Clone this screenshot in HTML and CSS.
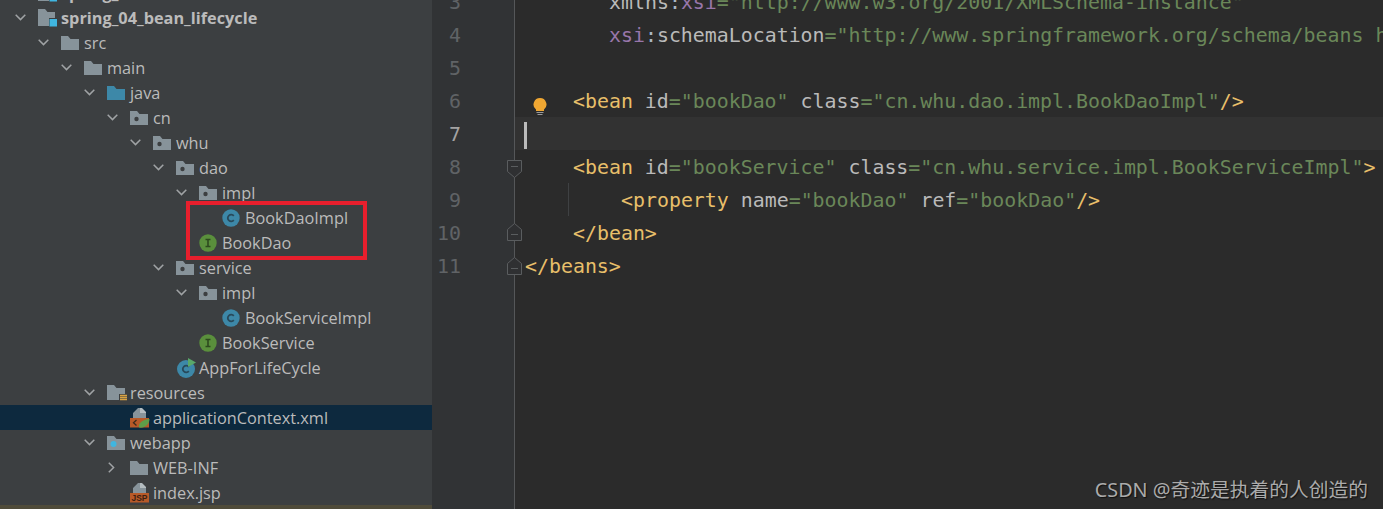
FILE: index.html
```html
<!DOCTYPE html>
<html lang="en">
<head>
<meta charset="utf-8">
<title>spring_04_bean_lifecycle</title>
<link rel="stylesheet" href="styles.css">
</head>
<body>
<svg class="defs" width="0" height="0" aria-hidden="true">
  <defs>
    <symbol id="chev-d" viewBox="0 0 11 7"><path d="M.7 .8 5.500 5.600 10.300 .8" fill="none" stroke="#a0a3a5" stroke-width="1.500"/></symbol>
    <symbol id="chev-r" viewBox="0 0 7 11"><path d="M.8 .7 5.600 5.500 .8 10.300" fill="none" stroke="#a0a3a5" stroke-width="1.500"/></symbol>
    <symbol id="folder" viewBox="0 0 18 16"><path d="M0 1h7l2.500 3H18v11H0z" fill="#87939a"/></symbol>
    <symbol id="java" viewBox="0 0 18 16"><path d="M0 1h7l2.500 3H18v11H0z" fill="#3d88a8"/></symbol>
    <symbol id="pkg" viewBox="0 0 18 16"><path d="M0 1h7l2.500 3H18v11H0z" fill="#87939a"/><circle cx="6.500" cy="9" r="2.200" fill="#3c3f41"/></symbol>
    <symbol id="web" viewBox="0 0 18 16"><path d="M0 1h7l2.500 3H18v11H0z" fill="#87939a"/><circle cx="6.500" cy="9" r="3" fill="#40b6e0"/></symbol>
    <symbol id="res" viewBox="0 0 20 16"><path d="M0 0h7l2.500 3H18v6h-6v6H0z" fill="#87939a"/><path d="M13 10.500h7M13 12.500h7M13 14.500h7" stroke="#d9a343" stroke-width="1.300"/></symbol>
    <symbol id="module" viewBox="0 0 19 18"><path d="M0 0h7l2.500 3H17v6h-6v8H0z" fill="#87939a"/><rect x="11.500" y="10" width="7.500" height="7.500" fill="#40b6e0"/></symbol>
    <symbol id="cls" viewBox="0 0 18 18"><circle cx="9" cy="9" r="8.700" fill="#3d88a8"/><path d="M11.800 6.800A3.400 3.400 0 1 0 11.800 11.200" fill="none" stroke="#28495a" stroke-width="1.800"/></symbol>
    <symbol id="ifc" viewBox="0 0 18 18"><circle cx="9" cy="9" r="8.700" fill="#5a8f3c"/><path d="M6.500 5.500h5M6.500 12.500h5M9 5.500v7" fill="none" stroke="#2d4a1e" stroke-width="1.600"/></symbol>
    <symbol id="run" viewBox="0 0 20 20"><circle cx="10" cy="11" r="9" fill="#3d88a8"/><path d="M12.800 8.800A3.400 3.400 0 1 0 12.800 13.200" fill="none" stroke="#28495a" stroke-width="1.800"/><path d="M12 0 20 4.500 12 9z" fill="#59a869"/></symbol>
    <symbol id="xml" viewBox="0 0 20 20"><path d="M3 10V5L8 0h2v5h6v5z" fill="#87939a"/><path d="M10 0h2l4 4v1h-6z" fill="#b4bcc0"/><rect x="0" y="10" width="19" height="9.500" fill="#b85a28"/><path d="M6.500 12 3.500 14.700 6.500 17.400" fill="none" stroke="#3c2a1c" stroke-width="1.300"/><path d="M9 19.500C8 15 13 11.500 19.500 11 19.500 16 15 20.500 9 19.500z" fill="#5f9e48"/></symbol>
    <symbol id="bulb" viewBox="0 0 14 18"><path d="M7 0a6.500 6.500 0 0 1 4 11.600V13H3v-1.400A6.500 6.500 0 0 1 7 0z" fill="#f0a732"/><path d="M3.500 14.500h7M4.500 16.500h5" stroke="#9a9a9a" stroke-width="1.200"/></symbol>
    <symbol id="fold-open" viewBox="0 0 15 18"><path d="M.5 .5h14v11l-7 6-7-6z" fill="#2f3032" stroke="#5a5d5f"/><path d="M4 6.500h7" stroke="#5a5d5f"/></symbol>
    <symbol id="fold-close" viewBox="0 0 15 18"><path d="M.5 17.500h14v-11l-7-6-7 6z" fill="#2f3032" stroke="#5a5d5f"/><path d="M4 11.500h7" stroke="#5a5d5f"/></symbol>
  </defs>
</svg>
<main class="ide">
  <aside class="tree">
    <div class="row top"><svg class="ic ic-mod"><use href="#module"/></svg><span class="bold">spring_04</span></div>
    <div class="row d0"><svg class="chev"><use href="#chev-d"/></svg><svg class="ic ic-mod"><use href="#module"/></svg><span class="bold">spring_04_bean_lifecycle</span></div>
    <div class="row d1"><svg class="chev"><use href="#chev-d"/></svg><svg class="ic"><use href="#folder"/></svg><span>src</span></div>
    <div class="row d2"><svg class="chev"><use href="#chev-d"/></svg><svg class="ic"><use href="#folder"/></svg><span>main</span></div>
    <div class="row d3"><svg class="chev"><use href="#chev-d"/></svg><svg class="ic"><use href="#java"/></svg><span>java</span></div>
    <div class="row d4"><svg class="chev"><use href="#chev-d"/></svg><svg class="ic"><use href="#pkg"/></svg><span>cn</span></div>
    <div class="row d5"><svg class="chev"><use href="#chev-d"/></svg><svg class="ic"><use href="#pkg"/></svg><span>whu</span></div>
    <div class="row d6"><svg class="chev"><use href="#chev-d"/></svg><svg class="ic"><use href="#pkg"/></svg><span>dao</span></div>
    <div class="row d7"><svg class="chev"><use href="#chev-d"/></svg><svg class="ic"><use href="#pkg"/></svg><span>impl</span></div>
    <div class="row d8 leaf"><svg class="ic"><use href="#cls"/></svg><span>BookDaoImpl</span></div>
    <div class="row d7 leaf"><svg class="ic"><use href="#ifc"/></svg><span>BookDao</span></div>
    <div class="row d6"><svg class="chev"><use href="#chev-d"/></svg><svg class="ic"><use href="#pkg"/></svg><span>service</span></div>
    <div class="row d7"><svg class="chev"><use href="#chev-d"/></svg><svg class="ic"><use href="#pkg"/></svg><span>impl</span></div>
    <div class="row d8 leaf"><svg class="ic"><use href="#cls"/></svg><span>BookServiceImpl</span></div>
    <div class="row d7 leaf"><svg class="ic"><use href="#ifc"/></svg><span>BookService</span></div>
    <div class="row d6 leaf"><svg class="ic ic-wide"><use href="#run"/></svg><span>AppForLifeCycle</span></div>
    <div class="row d3"><svg class="chev"><use href="#chev-d"/></svg><svg class="ic ic-wide"><use href="#res"/></svg><span>resources</span></div>
    <div class="row d4 leaf selected"><svg class="ic ic-wide"><use href="#xml"/></svg><span>applicationContext.xml</span></div>
    <div class="row d3"><svg class="chev"><use href="#chev-d"/></svg><svg class="ic"><use href="#web"/></svg><span>webapp</span></div>
    <div class="row d4"><svg class="chev right"><use href="#chev-r"/></svg><svg class="ic"><use href="#folder"/></svg><span>WEB-INF</span></div>
    <div class="row d4 leaf"><svg class="ic ic-wide" viewBox="0 0 20 20"><path d="M3 10V5L8 0h2v5h6v5z" fill="#87939a"/><path d="M10 0h2l4 4v1h-6z" fill="#b4bcc0"/><rect x="0" y="10" width="19" height="9.500" fill="#b85a28"/><text class="jsp" x="9.500" y="17.700">JSP</text></svg><span>index.jsp</span></div>
    <div class="callout"></div>
  </aside>
  <section class="editor">
    <div class="line"><div class="gutter"><span class="num">3</span></div><code class="code"><span class="in7"></span><span class="attr">xmlns</span>:<span class="ns">xsi</span><span class="str">="http://www.w3.org/2001/XMLSchema-instance"</span></code></div>
    <div class="line"><div class="gutter"><span class="num">4</span></div><code class="code"><span class="in7"></span><span class="ns">xsi</span>:<span class="attr">schemaLocation</span><span class="str">="http://www.springframework.org/schema/beans http://www.springframework.org/schema/beans/spring-beans.xsd"</span></code></div>
    <div class="line"><div class="gutter"><span class="num">5</span></div><code class="code"></code></div>
    <div class="line"><div class="gutter"><span class="num">6</span><svg class="bulb"><use href="#bulb"/></svg></div><code class="code"><span class="in4"></span><span class="tag">&lt;bean </span><span class="attr">id</span><span class="str">="bookDao"</span> <span class="attr">class</span><span class="str">="cn.whu.dao.impl.BookDaoImpl"</span><span class="tag">/&gt;</span></code></div>
    <div class="line current"><div class="gutter"><span class="num">7</span></div><code class="code"><span class="caret"></span></code></div>
    <div class="line"><div class="gutter"><span class="num">8</span><svg class="fold fold-start"><use href="#fold-open"/></svg></div><code class="code"><span class="in4"></span><span class="tag">&lt;bean </span><span class="attr">id</span><span class="str">="bookService"</span> <span class="attr">class</span><span class="str">="cn.whu.service.impl.BookServiceImpl"</span><span class="tag">&gt;</span></code></div>
    <div class="line"><div class="gutter"><span class="num">9</span></div><code class="code guide"><span class="in8"></span><span class="tag">&lt;property </span><span class="attr">name</span><span class="str">="bookDao"</span> <span class="attr">ref</span><span class="str">="bookDao"</span><span class="tag">/&gt;</span></code></div>
    <div class="line"><div class="gutter"><span class="num">10</span><svg class="fold fold-inner"><use href="#fold-close"/></svg></div><code class="code"><span class="in4"></span><span class="tag">&lt;/bean&gt;</span></code></div>
    <div class="line"><div class="gutter"><span class="num">11</span><svg class="fold"><use href="#fold-close"/></svg></div><code class="code"><span class="tag">&lt;/beans&gt;</span></code></div>
    <div class="line filler"><div class="gutter"></div></div>
    <div class="watermark">CSDN @奇迹是执着的人创造的</div>
  </section>
</main>
</body>
</html>
```
FILE: styles.css
```css
html, body {
  margin: 0;
  padding: 0;
  height: 100%;
  overflow: hidden;
  background: #2b2b2b;
}
.defs { position: absolute; }
.ide {
  display: flex;
  height: 509px;
  overflow: hidden;
}
.tree {
  position: relative;
  flex: 0 0 432px;
  height: 509px;
  box-sizing: border-box;
  background: #3c3f41;
  border-bottom: 4px solid #4f4b3a;
  overflow: hidden;
  font-family: "Open Sans", "Noto Sans", sans-serif;
  font-size: 16.3px;
  color: #bbbbbb;
}
.row {
  display: flex;
  align-items: center;
  height: 25px;
  white-space: nowrap;
}
.row.top { margin-top: -20px; padding-left: 38px; }
.bold { font-weight: 700; }
.chev { width: 11px; height: 7px; margin-left: 3px; margin-right: 12px; flex: none; }
.chev.right { width: 7px; height: 11px; margin-left: 4px; margin-right: 15px; }
.ic { width: 18px; height: 18px; margin-right: 5px; flex: none; }
.ic-wide { width: 20px; height: 20px; margin-right: 3px; }
.ic-mod { width: 19px; height: 18px; margin-right: 4px; }
.jsp {
  font-family: "Liberation Sans", sans-serif;
  font-size: 8.500px;
  font-weight: 700;
  fill: #3c2010;
  text-anchor: middle;
}
.d0 { padding-left: 12px; }
.d1 { padding-left: 35px; }
.d2 { padding-left: 58px; }
.d3 { padding-left: 81px; }
.d4 { padding-left: 104px; }
.d5 { padding-left: 127px; }
.d6 { padding-left: 150px; }
.d7 { padding-left: 173px; }
.d8 { padding-left: 196px; }
.leaf { margin-left: 26px; }
.selected { background: #0d293e; margin-left: 0; padding-left: 130px; }
.callout {
  position: absolute;
  left: 186px;
  top: 201px;
  width: 173px;
  height: 51px;
  border: 4px solid #e81f2d;
}
.editor {
  position: relative;
  flex: 1;
  min-width: 0;
  margin-top: -15px;
  font-family: "DejaVu Sans Mono", "Liberation Mono", monospace;
  font-size: 19.900px;
  color: #a9b7c6;
}
.line {
  display: flex;
  height: 33px;
  line-height: 35px;
}
.filler { height: 300px; }
.gutter {
  position: relative;
  flex: 0 0 83px;
  box-sizing: border-box;
  background: #313335;
  border-right: 1px solid #555759;
  padding-right: 53px;
  text-align: right;
  color: #606366;
  margin-right: 10px;
}
.current .gutter { margin-right: 9px; }
.current .num { color: #a4a3a3; }
.current { background: #323232; }
.code {
  flex: 1;
  min-width: 0;
  font: inherit;
  white-space: pre;
  overflow: hidden;
}
.guide { background: linear-gradient(#3f4143, #3f4143) 43px 0 / 1px 100% no-repeat; }
.in4 { padding-left: 48px; }
.in7 { padding-left: 84px; }
.in8 { padding-left: 96px; }
.tag { color: #e8bf6a; }
.attr { color: #bababa; }
.ns { color: #9876aa; }
.str { color: #6a8759; }
.caret {
  display: inline-block;
  width: 3px;
  height: 27px;
  vertical-align: middle;
  background: #bbbbbb;
}
.bulb {
  position: absolute;
  left: 101px;
  top: 14px;
  width: 14px;
  height: 18px;
}
.fold {
  position: absolute;
  left: 75px;
  top: 8px;
  width: 15px;
  height: 18px;
}
.fold-start { top: 10px; }
.fold-inner { top: 7px; }
.watermark {
  position: absolute;
  right: 15px;
  top: 491px;
  font-family: "Noto Sans", "Noto Sans CJK SC", sans-serif;
  font-size: 19.750px;
  line-height: 28px;
  color: #ababab;
  text-shadow: 1px 1px 1px #111;
  white-space: nowrap;
}
```
